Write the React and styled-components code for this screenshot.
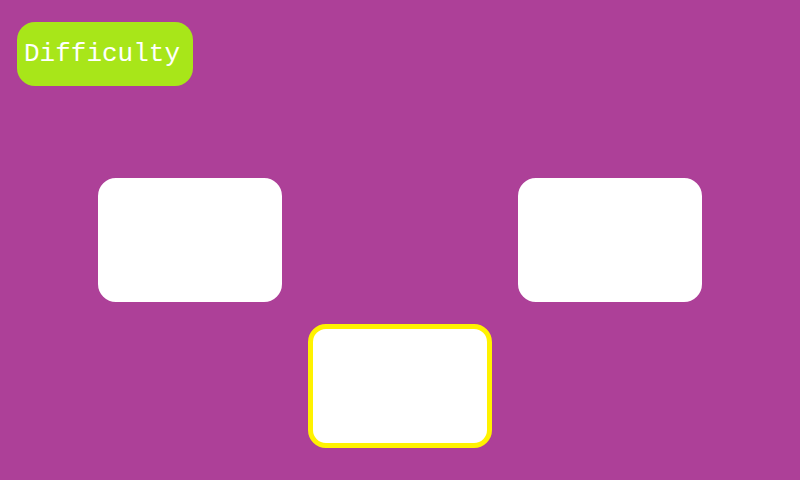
import React, { useState } from "react";
import styled, { createGlobalStyle } from "styled-components";

const GlobalStyle = createGlobalStyle`
  *, *::before, *::after { box-sizing: border-box; }
  body { margin: 0; background: #ad4098; }
`;

const Screen = styled.main`
  display: flex;
  flex-direction: column;
  gap: 92px;
  min-height: 100vh;
  padding: 22px 0 32px;
  background: #ad4098;
`;

const Toolbar = styled.header`
  display: flex;
  padding: 0 17px;
`;

const DifficultyButton = styled.button`
  height: 64px;
  padding: 0 13px 0 7px;
  border: 0;
  border-radius: 18px;
  background: #a8e619;
  color: #ffffff;
  font-family: "Courier New", "Liberation Mono", monospace;
  font-size: 26px;
  line-height: 32px;
  white-space: nowrap;
  cursor: pointer;
`;

const Choices = styled.section`
  display: grid;
  grid-template-columns: repeat(3, 1fr);
  gap: 22px 26px;
  padding: 0 98px;
`;

const columns = { left: 1, middle: 2, right: 3 };

const ChoiceCard = styled.button`
  grid-column: ${({ $place }) => columns[$place]};
  grid-row: ${({ $place }) => ($place === "middle" ? 2 : 1)};
  height: 124px;
  padding: 0;
  border: 5px solid ${({ $selected }) => ($selected ? "#fff200" : "#ffffff")};
  border-radius: 18px;
  background: #ffffff;
  cursor: pointer;
`;

const places = ["left", "right", "middle"];

export default function App() {
  const [selected, setSelected] = useState("middle");

  return (
    <>
      <GlobalStyle />
      <Screen>
        <Toolbar>
          <DifficultyButton type="button">Difficulty</DifficultyButton>
        </Toolbar>
        <Choices aria-label="Choices">
          {places.map((place) => (
            <ChoiceCard
              key={place}
              type="button"
              aria-label={`${place} card`}
              aria-pressed={selected === place}
              $place={place}
              $selected={selected === place}
              onClick={() => setSelected(place)}
            />
          ))}
        </Choices>
      </Screen>
    </>
  );
}
